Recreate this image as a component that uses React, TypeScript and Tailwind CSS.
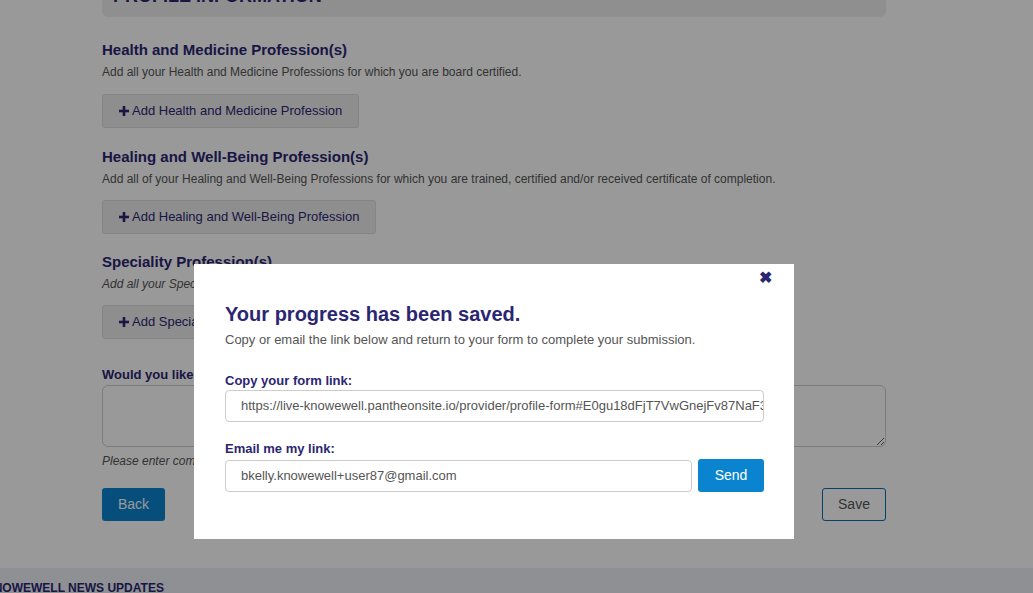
import React from "react";

const NAVY = "text-[#2b2672]";

function Plus() {
  return (
    <svg width="10" height="10" viewBox="0 0 10 10" className="fill-current">
      <rect x="3.7" y="0" width="2.6" height="10" />
      <rect x="0" y="3.7" width="10" height="2.6" />
    </svg>
  );
}

function AddButton({ label }: { label: string }) {
  return (
    <button
      className={`mt-[14px] h-[34px] px-4 rounded-[3px] border border-[#dcdcdc] bg-[#ededed] text-[13px] ${NAVY} flex items-center gap-[3px]`}
    >
      <Plus />
      <span>{label}</span>
    </button>
  );
}

export default function App() {
  return (
    <div
      className="relative h-[593px] w-[1033px] overflow-hidden bg-white"
      style={{ fontFamily: '"Liberation Sans", Arial, sans-serif' }}
    >
      <div className="mx-[102px] w-[784px]">
        <div className="mt-[-30px] h-[47px] rounded-b-[6px] bg-[#eeeeee] pl-[11px] pt-[15px]">
          <div className={`text-[18px] font-bold leading-[22px] ${NAVY}`}>PROFILE INFORMATION</div>
        </div>

        <h2 className={`mt-[24px] text-[15px] font-bold leading-[18px] ${NAVY}`}>
          Health and Medicine Profession(s)
        </h2>
        <p className="mt-[5px] text-[12px] leading-[16px] text-[#555]">
          Add all your Health and Medicine Professions for which you are board certified.
        </p>
        <AddButton label="Add Health and Medicine Profession" />

        <h2 className={`mt-[20px] text-[15px] font-bold leading-[18px] ${NAVY}`}>
          Healing and Well-Being Profession(s)
        </h2>
        <p className="mt-[5px] text-[12px] leading-[16px] text-[#555]">
          Add all of your Healing and Well-Being Professions for which you are trained, certified and/or received certificate of completion.
        </p>
        <div className="mt-[-1px]">
          <AddButton label="Add Healing and Well-Being Profession" />
        </div>

        <h2 className={`mt-[19px] text-[15px] font-bold leading-[18px] ${NAVY}`}>
          Speciality Profession(s)
        </h2>
        <p className="mt-[5px] text-[12px] italic leading-[16px] text-[#555]">
          Add all your Speciality Professions for which you are trained or certified.
        </p>
        <div className="mt-[-1px]">
          <AddButton label="Add Speciality Profession" />
        </div>

        <h3 className={`mt-[28px] text-[13px] font-bold leading-[16px] ${NAVY}`}>
          Would you like to share anything else with us?
        </h3>
        <textarea className="mt-[2px] block h-[62px] w-full rounded-[6px] border border-[#cfcfcf] bg-white" />
        <p className="mt-[6px] text-[12px] italic leading-[16px] text-[#555]">
          Please enter comments or additional information here.
        </p>

        <div className="mt-[19px] flex justify-between">
          <button className="h-[33px] w-[63px] rounded-[3px] bg-[#0b84d0] text-[14px] text-white">Back</button>
          <button className="h-[33px] w-[64px] rounded-[3px] border border-[#0b6fae] bg-white text-[14px] text-[#555]">
            Save
          </button>
        </div>
      </div>

      <div className="mt-[47px] h-[60px] bg-[#eef0f5] pt-[13px]">
        <div className={`ml-[-15px] text-[12px] font-bold leading-[15px] ${NAVY}`}>KNOWEWELL NEWS UPDATES</div>
      </div>

      {/* overlay */}
      <div className="absolute inset-0 bg-black/40" />

      {/* modal */}
      <div className="absolute left-[194px] top-[264px] h-[275px] w-[600px] bg-white pl-[31px] pr-[30px]">
        <button className={`absolute right-[22px] top-[4px] text-[16px] font-bold leading-[20px] ${NAVY}`}>✖</button>
        <h1 className={`mt-[38px] text-[20px] font-bold leading-[24px] ${NAVY}`}>Your progress has been saved.</h1>
        <p className="mt-[6px] text-[13px] leading-[16px] text-[#555]">
          Copy or email the link below and return to your form to complete your submission.
        </p>

        <div className={`mt-[25px] text-[13px] font-bold leading-[16px] ${NAVY}`}>Copy your form link:</div>
        <div className="mt-[1px] flex h-[32px] items-center overflow-hidden whitespace-nowrap rounded-[4px] border border-[#cccccc] pl-[15px] text-[13px] text-[#555]">
          https://live-knowewell.pantheonsite.io/provider/profile-form#E0gu18dFjT7VwGnejFv87NaF3kQw
        </div>

        <div className={`mt-[19px] text-[13px] font-bold leading-[16px] ${NAVY}`}>Email me my link:</div>
        <div className="mt-[3px] flex gap-[6px]">
          <div className="flex h-[32px] flex-1 items-center rounded-[4px] border border-[#cccccc] pl-[15px] text-[13px] text-[#555]">
            bkelly.knowewell+user87@gmail.com
          </div>
          <button className="mt-[-1px] h-[33px] w-[66px] rounded-[3px] bg-[#0b84d0] text-[14px] text-white">Send</button>
        </div>
      </div>
    </div>
  );
}
